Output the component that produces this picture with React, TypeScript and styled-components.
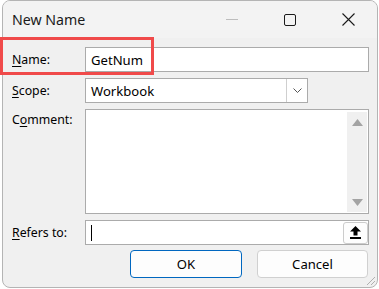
import React from "react";
import styled, { createGlobalStyle } from "styled-components";

const GlobalStyle = createGlobalStyle`
  html, body {
    margin: 0;
    padding: 0;
    background: #ffffff;
  }
  body {
    font-family: "Segoe UI", "Noto Sans", "Liberation Sans", sans-serif;
    color: #000000;
  }
`;

const Window = styled.div`
  position: relative;
  box-sizing: border-box;
  width: 376px;
  height: 288px;
  margin-left: 2px;
  border: 1px solid #b4b4b4;
  border-radius: 8px;
  background: #f0f0f0;
  display: flex;
  flex-direction: column;
`;

const TitleBar = styled.div`
  height: 37px;
  flex: none;
  display: flex;
  align-items: center;
  background: #f3f3f3;
  border-radius: 7px 7px 0 0;
  padding-left: 9px;
`;

const Title = styled.div`
  flex: 1;
  font-size: 14.2px;
  color: #1a1a1a;
  margin-top: -1px;
`;

const Controls = styled.div`
  display: flex;
  align-items: center;
`;

const ControlButton = styled.div`
  width: 58px;
  height: 37px;
  display: flex;
  align-items: center;
  justify-content: center;
`;

const Body = styled.div`
  flex: 1;
  display: grid;
  grid-template-columns: 73px 1fr;
  grid-template-rows: 25px 25px 105px 25px 28px;
  row-gap: 6px;
  padding: 9px 8px 0 9px;
`;

const Label = styled.div<{ $top?: boolean }>`
  font-size: 12.3px;
  display: flex;
  align-items: ${(p) => (p.$top ? "flex-start" : "center")};
  padding-top: ${(p) => (p.$top ? "2px" : "0")};
  color: #000;
`;

const Key = styled.span`
  text-decoration: underline;
  text-underline-offset: 2px;
`;

const Field = styled.div<{ $width?: number }>`
  box-sizing: border-box;
  position: relative;
  width: ${(p) => (p.$width ? `${p.$width}px` : "100%")};
  height: 100%;
  background: #ffffff;
  border: 1px solid #ababab;
  display: flex;
  align-items: center;
  padding-left: 5px;
  font-size: 13.1px;
  color: #000;
`;

const FieldText = styled.span`
  flex: 1;
`;

const DropButton = styled.div`
  box-sizing: border-box;
  width: 21px;
  height: 100%;
  border-left: 1px solid #cfcfcf;
  display: flex;
  align-items: center;
  justify-content: center;
`;

const TextArea = styled(Field)`
  align-items: stretch;
  padding: 2px 1px 1px 0;
  justify-content: flex-end;
`;

const ScrollBar = styled.div`
  width: 20px;
  background: #f0f0f0;
  display: flex;
  flex-direction: column;
  justify-content: space-between;
  align-items: center;
  padding: 7px 0 6px;
`;

const Caret = styled.div`
  width: 1px;
  height: 16px;
  background: #000;
  flex: none;
`;

const RefButton = styled.div`
  box-sizing: border-box;
  width: 25px;
  height: 22px;
  border: 1px solid #cccccc;
  border-radius: 3px;
  background: #fdfdfd;
  display: flex;
  align-items: center;
  justify-content: center;
`;

const ButtonRow = styled.div`
  grid-column: 1 / span 2;
  display: flex;
  justify-content: flex-end;
  gap: 15px;
  padding-right: 1px;
  margin-top: -1px;
`;

const Button = styled.div<{ $primary?: boolean }>`
  box-sizing: border-box;
  width: ${(p) => (p.$primary ? 112 : 111)}px;
  height: 28px;
  border-radius: 4px;
  background: #fdfdfd;
  border: 1px solid ${(p) => (p.$primary ? "#0067c0" : "#d0d0d0")};
  display: flex;
  align-items: center;
  justify-content: center;
  font-size: 13.1px;
  color: #000;
`;

const Highlight = styled.div`
  position: absolute;
  left: -3px;
  top: 36px;
  width: 148px;
  height: 32px;
  border: 3px solid #f04a4a;
  pointer-events: none;
`;

const Grip = styled.svg`
  position: absolute;
  right: 1px;
  bottom: 1px;
`;

export default function App() {
  return (
    <>
      <GlobalStyle />
      <Window>
        <TitleBar>
          <Title>New Name</Title>
          <Controls>
            <ControlButton>
              <svg width="12" height="2" viewBox="0 0 12 2">
                <rect x="0" y="0" width="12" height="1" fill="#bdbdbd" />
              </svg>
            </ControlButton>
            <ControlButton>
              <svg width="12" height="12" viewBox="0 0 12 12">
                <rect x="0.5" y="0.5" width="11" height="11" rx="1.5" fill="none" stroke="#1a1a1a" />
              </svg>
            </ControlButton>
            <ControlButton>
              <svg width="13" height="13" viewBox="0 0 13 13">
                <path d="M0.5 0.5 L12.5 12.5 M12.5 0.5 L0.5 12.5" stroke="#1a1a1a" strokeWidth="1.1" />
              </svg>
            </ControlButton>
          </Controls>
        </TitleBar>
        <Body>
          <Label>
            <span><Key>N</Key>ame:</span>
          </Label>
          <Field>
            <FieldText>GetNum</FieldText>
          </Field>

          <Label>
            <span><Key>S</Key>cope:</span>
          </Label>
          <Field $width={223}>
            <FieldText>Workbook</FieldText>
            <DropButton>
              <svg width="9" height="5" viewBox="0 0 9 5">
                <path d="M0.5 0.5 L4.5 4.5 L8.5 0.5" fill="none" stroke="#555" strokeWidth="1" />
              </svg>
            </DropButton>
          </Field>

          <Label $top>
            <span>C<Key>o</Key>mment:</span>
          </Label>
          <TextArea>
            <ScrollBar>
              <svg width="11" height="7" viewBox="0 0 11 7">
                <path d="M0 7 L5.5 0 L11 7 Z" fill="#a3a3a3" />
              </svg>
              <svg width="11" height="7" viewBox="0 0 11 7">
                <path d="M0 0 L5.5 7 L11 0 Z" fill="#a3a3a3" />
              </svg>
            </ScrollBar>
          </TextArea>

          <Label>
            <span><Key>R</Key>efers to:</span>
          </Label>
          <Field>
            <Caret />
            <FieldText />
            <RefButton>
              <svg width="11" height="13" viewBox="0 0 11 13">
                <path d="M5.5 0 L11 5.5 L7.5 5.5 L7.5 9.5 L3.5 9.5 L3.5 5.5 L0 5.5 Z" fill="#000" />
                <rect x="0" y="11" width="11" height="2" fill="#000" />
              </svg>
            </RefButton>
          </Field>

          <ButtonRow>
            <Button $primary>OK</Button>
            <Button>Cancel</Button>
          </ButtonRow>
        </Body>
        <Highlight />
        <Grip width="12" height="12" viewBox="0 0 12 12">
          <path d="M11 3 L3 11 M11 7 L7 11" stroke="#b0b0b0" strokeWidth="1" />
        </Grip>
      </Window>
    </>
  );
}
